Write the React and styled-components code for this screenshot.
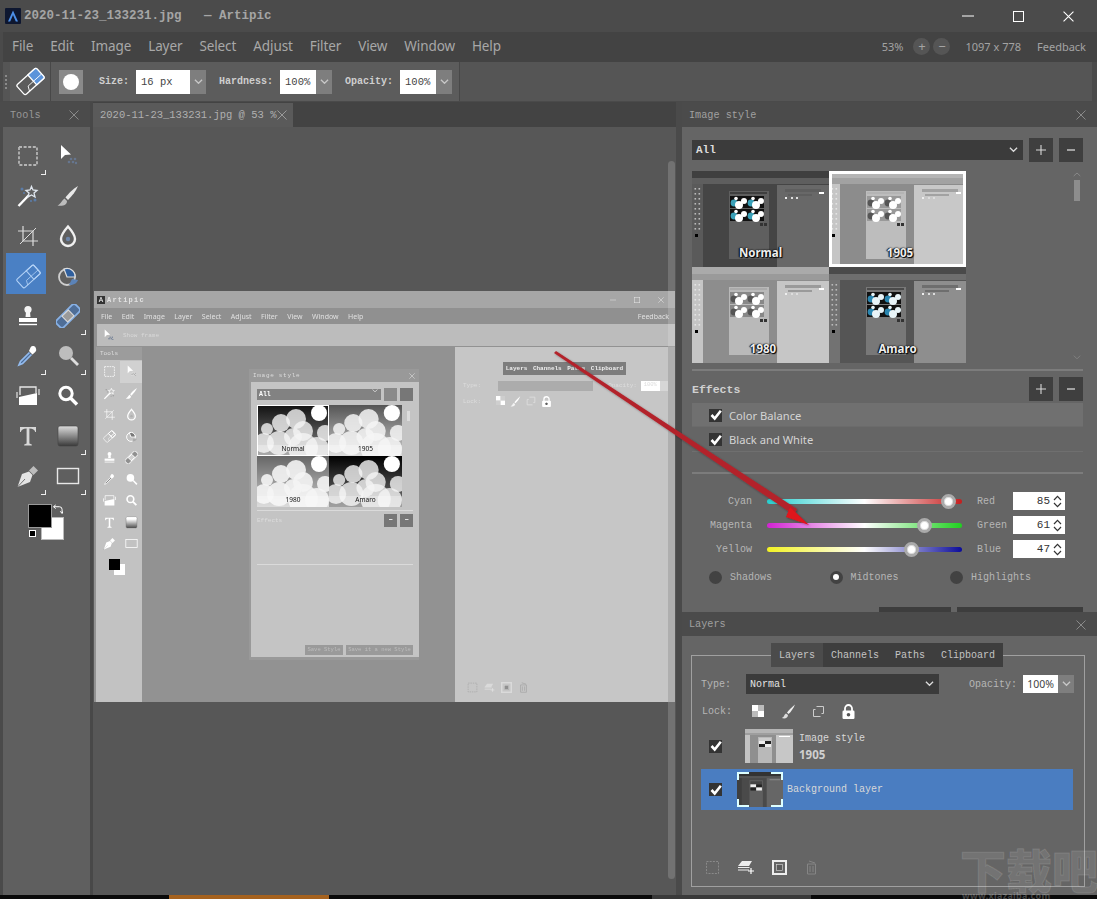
import React from 'react';
import styled, { createGlobalStyle } from 'styled-components';

const Global = createGlobalStyle`
  html, body { margin: 0; padding: 0; background: #4a4a4a; }
  * { box-sizing: border-box; }
  #root { width: 1097px; height: 899px; overflow: hidden; }
`;
const MONO = `"Liberation Mono", "DejaVu Sans Mono", monospace`;
const SANS = `"Noto Sans", "Open Sans", Arial, sans-serif`;

const Page = styled.div`
  position: relative; width: 1097px; height: 899px; overflow: hidden;
  background: #4a4a4a; display: flex; flex-direction: column; font-family: ${SANS};
`;
const TitleBar = styled.div`
  height: 32px; display: flex; align-items: center; padding-left: 5px; background: #4b4b4b; flex: none;
`;
const Logo = styled.svg`width: 16px; height: 16px; flex: none; margin-top: -1px;`;
const TitleText = styled.div`
  margin-left: 3px; font: bold 12.5px ${MONO}; color: #a5a5a5; white-space: pre; flex: 1;
`;
const WinBtn = styled.div`
  width: 50px; height: 32px; display: flex; align-items: center; justify-content: center;
  &:last-child { margin-right: 4px; }
`;
const MenuBar = styled.div`
  height: 30px; flex: none; margin-left: 3px; background: #434343; display: flex; align-items: center;
  padding: 0 11px 2px 9px; color: #a8a8a8; font-size: 13.5px;
`;
const MenuItem = styled.span`margin-right: 17px; letter-spacing: -.1px;`;
const MenuRight = styled.div`margin-left: auto; display: flex; align-items: center; font-size: 11px; color: #a4a4a4;`;
const ZoomBtn = styled.span`
  width: 17px; height: 17px; border-radius: 50%; background: #555; color: #a4a4a4; margin-left: ${p => p.$ml}px;
  display: flex; align-items: center; justify-content: center; font-size: 13px; line-height: 1;
`;
const SizeLabel = styled.span`margin-left: 15px; margin-right: 16px;`;
const OptionsBar = styled.div`
  height: 40px; flex: none; margin-left: 3px; margin-right: 5px; background: #555; display: flex; align-items: stretch;
  border-bottom: 1px solid #4a4a4a;
`;
const Grip = styled.div`
  width: 7px; padding-left: 2px; display: flex; flex-direction: column; gap: 2px; justify-content: center;
  & i { display: block; width: 2px; height: 2px; background: #8a8a8a; }
`;
const ToolSlot = styled.div`
  width: 41px; background: #5c5c5c; border-right: 1px solid #484848; display: flex; align-items: center; justify-content: center;
`;
const OptionGroup = styled.div`
  width: 409px; background: #5c5c5c; border-right: 1px solid #484848; display: flex; align-items: center; padding-left: 8px;
  font: bold 10px ${MONO}; color: #cfcfcf;
`;
const BrushPreview = styled.div`
  width: 24px; height: 24px; background: #8a8a8a; display: flex; align-items: center; justify-content: center; margin-right: 16px;
  &::after { content: ""; width: 16px; height: 16px; border-radius: 50%; background: #fff; }
`;
const OptLabel = styled.span`white-space: pre; margin-right: ${p => p.$mr}px;`;
const ComboValue = styled.div`
  width: ${p => p.$w}px; height: 24px; background: #fff; color: #444; font: 10.5px ${MONO}; display: flex; align-items: center; padding-left: 5px; white-space: pre;
`;
const ComboCaret = styled.div`
  width: 16px; height: 24px; background: #7e7e7e; display: flex; align-items: center; justify-content: center; margin-right: ${p => p.$mr}px;
`;
const Workspace = styled.div`flex: 1; display: flex; min-height: 0;`;
const ToolsColumn = styled.div`width: 90px; flex: none; display: flex; flex-direction: column;`;
const TabHead = styled.div`
  height: 25px; flex: none; background: #4b4b4b; display: flex; align-items: center; justify-content: space-between;
  padding: 1px 11px 0 10px; font: 10.2px ${MONO}; color: #979797;
`;
const ToolsBody = styled.div`
  flex: 1; margin-left: 3px; background: #5f5f5f; padding: 9px 0 0 5px;
`;
const ToolGrid = styled.div`display: grid; grid-template-columns: 40px 40px; grid-auto-rows: 40px;`;
const ToolCell = styled.div`
  position: relative; display: flex; align-items: center; justify-content: center;
  ${p => p.$active && `
    &::before { content: ""; position: absolute; left: -2px; top: -3px; width: 40px; height: 41px; background: #4a80c4; }
  `}
  & > * { position: relative; }
  ${p => p.$corner && `
    &::after { content: ""; position: absolute; right: 2px; bottom: 1px; width: 4px; height: 4px; border-right: 1px solid #eee; border-bottom: 1px solid #eee; }
  `}
`;
const SwatchBox = styled.div`position: relative; width: 42px; height: 42px; margin: 8px 0 0 15px;`;
const Fg = styled.div`position: absolute; left: 5px; top: 0; width: 24px; height: 24px; background: #000; border: 1px solid #999; z-index: 1;`;
const Bg = styled.div`position: absolute; left: 18px; top: 13px; width: 23px; height: 23px; background: #fff; border: 1px solid #bbb;`;
const MiniDefault = styled.div`
  position: absolute; left: 6px; top: 26px; width: 7px; height: 7px; background: #000; border: 1px solid #fff; z-index: 2;
`;
const SwapMark = styled.svg`position: absolute; left: 30px; top: 0; width: 10px; height: 10px;`;
const Gutter = styled.div`width: 3px; flex: none; background: #484848;`;
const DocColumn = styled.div`width: 583px; flex: none; display: flex; flex-direction: column;`;
const DocTabs = styled.div`height: 25px; flex: none; background: #434343; display: flex; align-items: flex-end;`;
const DocTab = styled.div`
  width: 200px; height: 24px; background: #5a5a5a; display: flex; align-items: center; justify-content: space-between;
  padding: 0 6px 0 7px; font: 10.5px ${MONO}; color: #b0b0b0; white-space: pre;
`;
const Canvas = styled.div`
  position: relative; flex: 1; background: #575757; padding: 164px 0 0 1px; overflow: hidden;
`;
const VScroll = styled.div`
  position: absolute; right: 1px; top: 34px; width: 7px; height: 718px; border-radius: 4px; background: rgba(255,255,255,.16);
`;
const RightGutter = styled.div`width: 6px; flex: none; background: #4a4a4a;`;
const Dock = styled.div`width: 415px; flex: none; display: flex; flex-direction: column;`;
const PanelHead = styled.div`
  height: ${p => p.$h}px; flex: none; background: #4b4b4b; display: flex; align-items: center; justify-content: space-between;
  padding: 1px 11px 0 7px; font: 10.2px ${MONO}; color: #a0a0a0;
`;
const StylePanel = styled.div`
  height: 485px; flex: none; background: #656565; padding: 11px 14px 0 10px; overflow: hidden; display: flex; flex-direction: column;
`;
const SelectRow = styled.div`display: flex; align-items: center; gap: 6px; height: 24px; flex: none;`;
const DarkSelect = styled.div`
  flex: ${p => (p.$w ? 'none' : '1')}; width: ${p => p.$w || 0}px; height: 20px; background: #3b3b3b; color: ${p => p.$c || '#ddd'}; display: flex; align-items: center; justify-content: space-between;
  padding: 0 5px 0 4px; font: ${p => p.$weight || 'bold'} ${p => p.$fs || 11}px ${MONO}; margin-right: ${p => p.$mr || 0}px;
`;
const SqBtn = styled.div`
  width: 24px; height: 24px; background: #3f3f3f; color: #d5d5d5; display: flex; align-items: center; justify-content: center;
`;
const GalleryRow = styled.div`margin-top: 9px; height: 192px; display: flex; flex: none; justify-content: space-between;`;
const Gallery = styled.div`display: grid; grid-template-columns: 137px 137px; grid-auto-rows: 96px;`;
const Thumb = styled.div`
  position: relative; overflow: hidden; display: flex; align-items: flex-end; justify-content: center;
  ${p => p.$sel && `&::after { content: ""; position: absolute; inset: 0; border: 3px solid #fff; }`}
`;
const ThumbSvg = styled.svg`position: absolute; inset: 0; width: 100%; height: 100%;`;
const ThumbLabel = styled.span`
  position: relative; font-size: 11.5px; font-weight: bold; color: #eee; margin-bottom: 7px; margin-left: ${p => p.$ml || 0}px;
  text-shadow: 1px 1px 1px #000, -1px 0 1px #000, 0 0 2px #000;
`;
const GalleryScroll = styled.div`
  width: 10px; display: flex; flex-direction: column; align-items: center; justify-content: space-between; padding: 1px 0 3px; margin-right: 1px;
`;
const ScrollThumb = styled.div`width: 6px; height: 21px; background: #8d8d8d; margin-top: 3px; margin-bottom: auto;`;
const Rule = styled.div`height: 2px; background: #7c7c7c; flex: none; margin-top: ${p => p.$mt}px;`;
const EffectsHead = styled.div`
  display: flex; align-items: center; gap: 6px; height: 24px; margin-top: 6px; flex: none;
  font: bold 11.5px ${MONO}; color: #d0d0d0;
`;
const EffectsTitle = styled.span`flex: 1;`;
const EffectRow = styled.div`
  height: ${p => p.$h}px; flex: none; background: ${p => (p.$on ? '#707070' : 'transparent')}; border-bottom: 1px solid ${p => (p.$on ? '#6b6b6b' : '#6f6f6f')};
  display: flex; align-items: center; padding: 1px 0 0 17px; gap: 7px; font-size: 11.2px; color: #d4d4d4;
  margin-top: ${p => p.$mt || 0}px;
`;
const Check = styled.span`
  width: 13px; height: 13px; background: #333; display: inline-flex; align-items: center; justify-content: center; flex: none;
`;
const Sliders = styled.div`margin-top: 15px; flex: none;`;
const SliderRow = styled.div`
  height: 24px; display: grid; grid-template-columns: 60px 225px 36px 52px; align-items: center;
  font: 10px ${MONO}; color: #b6b6b6;
`;
const SliderColumn = styled.span`display: block; &:first-child { text-align: right; }`;
const Track = styled.div`
  position: relative; height: 5px; margin: 0 15px; border-radius: 3px; background: linear-gradient(to right, ${p => p.$from}, #fff 50%, ${p => p.$to});
`;
const Knob = styled.div`
  position: absolute; top: 50%; width: 15px; height: 15px; margin: -7.5px 0 0 -7.5px; border-radius: 50%;
  background: #fff; border: 3px solid #aaa; box-shadow: inset 0 0 0 1px #ddd;
`;
const Stepper = styled.div`
  height: 18px; background: #fff; color: #333; font: 11px ${MONO};
  display: flex; align-items: center; justify-content: flex-end; gap: 3px; padding-right: 3px; width: 52px;
`;
const RadioRow = styled.div`
  display: flex; margin-top: 8px; height: 16px; align-items: center; padding-left: 17px; flex: none;
  font: 10px ${MONO}; color: #b6b6b6;
`;
const RadioItem = styled.div`width: 120.5px; display: flex; align-items: center; gap: 8px;`;
const RadioDot = styled.span`
  width: 13px; height: 13px; border-radius: 50%; background: #424242; display: flex; align-items: center; justify-content: center;
  ${p => p.$on && `&::after { content: ""; width: 6px; height: 6px; border-radius: 50%; background: #fff; }`}
`;
const SaveRow = styled.div`display: flex; justify-content: flex-end; gap: 6px; margin-top: 22px; flex: none;`;
const SaveBtn = styled.div`
  width: ${p => p.$w}px; height: 24px; background: #3d3d3d; color: #bbb; font: 11px ${MONO};
  display: flex; justify-content: center; padding-top: 6px;
`;
const LayersPanel = styled.div`flex: 1; background: #656565; padding: 19px 12px 8px 9px; display: flex; flex-direction: column;`;
const GroupBox = styled.div`
  flex: 1; border: 1px solid #a0a0a0; padding: 0 10px 10px 9px; display: flex; flex-direction: column;
`;
const GroupTabs = styled.div`
  display: flex; width: 232px; height: 24px; margin: -13px 0 0 70px; background: #3e3e3e; flex: none;
  font: 10px ${MONO}; color: #c4c4c4;
`;
const GTab = styled.div`
  width: ${p => p.$w}px; background: ${p => (p.$on ? '#4b4b4b' : 'transparent')}; display: flex; align-items: center; justify-content: center;
`;
const TypeRow = styled.div`display: flex; align-items: center; height: 20px; margin-top: 7px; flex: none; font: 10px ${MONO}; color: #b6b6b6;`;
const RowLabel = styled.span`width: ${p => p.$w}px; flex: none; padding-left: ${p => p.$pl || 0}px;`;
const SmallCombo = styled.div`
  width: 36px; height: 18px; background: #fff; color: #444; font: 10.5px ${SANS}; display: flex; align-items: center; justify-content: center;
`;
const SmallCaret = styled.div`width: 16px; height: 18px; background: #7e7e7e; display: flex; align-items: center; justify-content: center;`;
const LockRow = styled.div`display: flex; align-items: center; height: 20px; margin-top: 7px; flex: none; font: 10px ${MONO}; color: #b6b6b6;`;
const LockIcon = styled.div`width: 30px; display: flex; justify-content: center; flex: none;`;
const LayerRow = styled.div`
  height: ${p => p.$h}px; flex: none; display: flex; align-items: center; margin-top: ${p => p.$mt}px;
  background: ${p => (p.$on ? '#4a7dc1' : 'transparent')}; padding-left: 8px;
  margin-right: 1px;
`;
const LayerThumb = styled.div`
  position: relative; width: ${p => p.$w}px; height: ${p => p.$h}px; margin-left: ${p => p.$ml}px; flex: none;
  & svg { display: block; width: 100%; height: 100%; }
`;
const Corners = styled.i`
  position: absolute; inset: 0; display: block;
  background:
    linear-gradient(#dff,#dff) 0 0/12px 2px no-repeat, linear-gradient(#dff,#dff) 0 0/2px 8px no-repeat,
    linear-gradient(#dff,#dff) 100% 0/12px 2px no-repeat, linear-gradient(#dff,#dff) 100% 0/2px 8px no-repeat,
    linear-gradient(#dff,#dff) 0 100%/12px 2px no-repeat, linear-gradient(#dff,#dff) 0 100%/2px 8px no-repeat,
    linear-gradient(#dff,#dff) 100% 100%/12px 2px no-repeat, linear-gradient(#dff,#dff) 100% 100%/2px 8px no-repeat;
`;
const LayerInfo = styled.div`
  margin-left: ${p => p.$ml}px; font: 10px ${MONO}; color: #d8d8d8; line-height: 17px;
`;
const LayerStrong = styled.div`font: bold 11.5px ${SANS}; color: #cfcfcf;`;
const LayerTools = styled.div`margin-top: auto; display: flex; align-items: center; padding-left: 4px; gap: 17px; flex: none;`;
const BottomStrip = styled.div`height: 4px; flex: none; background: #0a0a0a; display: flex;`;
const StripSeg = styled.div`width: ${p => p.$w}px; background: ${p => p.$c};`;
const ArrowLayer = styled.svg`position: absolute; left: 0; top: 0; width: 1097px; height: 899px; pointer-events: none;`;
const Watermark = styled.div`
  position: absolute; left: 960px; top: 845px; width: 137px; pointer-events: none; white-space: nowrap; overflow: hidden;
  font: 900 46px "Noto Sans CJK SC", sans-serif; color: rgba(255,255,255,.1); -webkit-text-stroke: 1px rgba(255,255,255,.12); line-height: 47px;
`;
const WaterUrl = styled.div`
  font: bold 9px ${SANS}; -webkit-text-stroke: 0; color: rgba(255,255,255,.25); line-height: 7px; padding-left: 2px; letter-spacing: .3px;
`;

/* nested screenshot */
const Shot = styled.div`
  width: 581px; height: 411px; background: #929292; display: flex; flex-direction: column; overflow: hidden; color: #eee;
  filter: blur(.35px);
`;
const ShotTitle = styled.div`
  height: 17px; flex: none; background: #a6a6a6; display: flex; align-items: center; padding-left: 3px; font: bold 7px ${MONO}; letter-spacing: 1.2px; color: #e2e2e2;
`;
const ShotLogo = styled.span`
  width: 8px; height: 8px; background: #333; margin-right: 2px; color: #fff; font: 7px ${SANS}; line-height: 8px; text-align: center; letter-spacing: 0;
`;
const ShotWin = styled.div`
  margin-left: auto; display: flex; gap: 18px; padding-right: 11px; align-items: center;
`;
const ShotMenu = styled.div`
  height: 16px; flex: none; background: #909090; display: flex; align-items: center; padding: 0 6px 0 7px; font: 7px ${SANS}; color: #e0e0e0;
`;
const ShotMenuItem = styled.span`margin-right: 9.5px;`;
const ShotFeedback = styled.span`margin-left: auto;`;
const ShotOpts = styled.div`
  height: 22px; flex: none; margin-left: 3px; background: #bcbcbc; display: flex; align-items: center; padding-left: 5px; gap: 8px; font: 6px ${MONO}; color: #d8d8d8;
`;
const ShotBody = styled.div`flex: 1; display: flex; min-height: 0; margin-top: 1px;`;
const ShotTools = styled.div`width: 46px; margin-left: 2px; flex: none; display: flex; flex-direction: column;`;
const ShotToolsHead = styled.div`
  height: 13px; flex: none; background: #9c9c9c; font: 6px ${MONO}; color: #ddd; display: flex; align-items: center; padding-left: 4px;
`;
const ShotToolsBody = styled.div`flex: 1; background: #c2c2c2; padding: 1px 0 0 2px;`;
const ShotToolGrid = styled.div`
  display: grid; grid-template-columns: 22px 22px; grid-auto-rows: 21.5px; filter: grayscale(1) brightness(1.35);
`;
const ShotToolCell = styled.div`
  display: flex; align-items: center; justify-content: center; background: ${p => (p.$on ? 'rgba(255,255,255,.25)' : 'transparent')};
`;
const ShotSwatch = styled.div`
  position: relative; width: 16px; height: 16px; margin: 4px 0 0 11px;
  &::before { content: ""; position: absolute; left: 0; top: 0; width: 11px; height: 11px; background: #000; z-index: 1; }
  &::after { content: ""; position: absolute; left: 5px; top: 5px; width: 11px; height: 11px; background: #fff; }
`;
const ShotCanvas = styled.div`flex: 1; padding: 22px 36px 0 107px; min-width: 0; display: flex; align-items: flex-start;`;
const ShotPanel = styled.div`
  width: 170px; height: 291px; flex: none; background: #999; padding: 0 0 3px 2px; display: flex; flex-direction: column;
`;
const ShotPanelHead = styled.div`
  height: 13px; flex: none; font: 6px ${MONO}; letter-spacing: .7px; color: #ddd; display: flex; align-items: center; justify-content: space-between; padding: 0 4px 0 2px;
`;
const ShotPanelBody = styled.div`flex: 1; background: #c4c4c4; padding: 6px 6px 0 6px; display: flex; flex-direction: column;`;
const ShotSelRow = styled.div`display: flex; gap: 3px; height: 13px; align-items: center; flex: none;`;
const ShotSelect = styled.div`
  flex: 1; height: 11px; background: #828282; color: #fff; font: bold 6.5px ${MONO}; padding-left: 2px; line-height: 11px; display: flex; justify-content: space-between; padding-right: 3px;
`;
const ShotSq = styled.div`width: 13px; height: 13px; background: ${p => p.$c || '#8a8a8a'}; color: #fff; font: bold 7px ${SANS}; line-height: 12px; text-align: center; flex: none;`;
const ShotGalRow = styled.div`display: flex; gap: 5px; margin-top: 4px; flex: none;`;
const ShotCells = styled.div`display: grid; grid-template-columns: 72px 73px; grid-auto-rows: 51px; height: 102px; flex: none;`;
const ShotScroll = styled.div`width: 3px; height: 10px; background: #dcdcdc; margin-top: 6px;`;
const ShotCell = styled.div`
  position: relative; display: flex; align-items: flex-end; justify-content: center;
  & svg { position: absolute; inset: 0; width: 100%; height: 100%; }
  ${p => p.$sel && `&::after { content: ""; position: absolute; inset: 0; border: 1px solid #fff; }`}
`;
const ShotCellLabel = styled.span`position: relative; font: 6.5px ${SANS}; color: #111; margin-bottom: 3px;`;
const ShotRule = styled.div`height: 1px; background: #dadada; flex: none; margin-top: ${p => p.$mt}px;`;
const ShotEffects = styled.div`
  display: flex; gap: 3px; align-items: center; margin-top: 3px; height: 13px; font: 6px ${MONO}; color: #ddd; flex: none;
  & > span:first-child { flex: 1; }
`;
const ShotSave = styled.div`margin-top: auto; margin-bottom: 2px; display: flex; gap: 3px; justify-content: flex-end; flex: none;`;
const ShotSaveBtn = styled.div`
  width: ${p => p.$w}px; height: 10px; background: #9a9a9a; font: 5.5px ${MONO}; color: #bdbdbd; text-align: center; line-height: 10px; overflow: hidden; white-space: nowrap;
`;
const ShotLayers = styled.div`width: 213px; flex: none; background: #c6c6c6; display: flex; flex-direction: column; padding: 15px 0 0 8px; font: 6px ${MONO}; color: #ddd;`;
const ShotTabs = styled.div`
  margin-left: 40px; width: 123px; height: 13px; background: #7d7d7d; color: #eee; font: bold 6px ${MONO}; display: flex; justify-content: space-around; align-items: center; flex: none;
`;
const ShotTypeRow = styled.div`display: flex; align-items: center; height: 11px; margin-top: 5px; flex: none;`;
const ShotTypeSel = styled.div`width: 102px; height: 10px; background: #acacac; margin: 0 15px 0 17px;`;
const ShotOpacity = styled.div`width: 20px; height: 10px; background: #fff; margin-left: 4px; color: #ddd; font-size: 5.5px; text-align: center;`;
const ShotOpCaret = styled.div`width: 9px; height: 10px; background: #d6d6d6;`;
const ShotLock = styled.div`display: flex; align-items: center; margin-top: 3px; height: 14px; flex: none;`;
const ShotLockIcons = styled.div`display: flex; gap: 5px; margin-left: 15px; filter: brightness(1.1);`;
const ShotFoot = styled.div`margin-top: auto; padding: 0 0 9px 4px; display: flex; gap: 6px; flex: none; opacity: .5;`;
const ShotStrip = styled.div`width: 7px; flex: none; background: #a0a0a0;`;

/* icons */
const Ico = ({ s = 24, children }) => <svg width={s} height={s} viewBox="0 0 24 24" fill="none">{children}</svg>;
const Marquee = ({ s, c = '#b4b4b4' }) => <Ico s={s}><rect x="3" y="3" width="18" height="18" stroke={c} strokeWidth="1.8" strokeDasharray="3 1.6" /></Ico>;
const Pointer = ({ s }) => <Ico s={s}><path d="M5 1 L5 15 L9 11 L15 10.5 Z" fill="#fff" /><g fill="#66768f"><circle cx="15" cy="15" r="1.3" /><circle cx="19" cy="15" r="1.3" /><circle cx="17" cy="18" r="1.3" /><circle cx="13" cy="18" r="1.3" /><circle cx="20" cy="19" r="1.2" /></g></Ico>;
const Wand = ({ s }) => <Ico s={s}><path d="M2.5 22 L13 11" stroke="#fff" strokeWidth="2.4" /><path d="M15.5 2.5 L17 6 L21 6.5 L18 9 L19 13 L15.5 11 L12 13 L13 9 L10 6.5 L14 6 Z" stroke="#dfe6ee" strokeWidth="1.3" /><g fill="#5b7ca8"><circle cx="6" cy="5" r="1.5" /><circle cx="8" cy="9" r="1" /><circle cx="19" cy="16" r="1.5" /><circle cx="15" cy="17" r="1.1" /></g></Ico>;
const Brush = ({ s }) => <Ico s={s}><path d="M22 2 C17 5 12 10 9.5 13.5 L12 16 C16 12 20 7 22 2Z" fill="#e8e8e8" /><path d="M8.5 14.5 C6 16 5.5 19.5 1.5 21.5 C6 22.5 11 21.5 11 17 Z" fill="#bdbdbd" /></Ico>;
const Crop = ({ s }) => <Ico s={s}><path d="M7 2 V17 H22 M2 7 H17 V22" stroke="#dcdcdc" strokeWidth="1.2" /><path d="M4 20 L20 4" stroke="#dcdcdc" strokeWidth="1" /></Ico>;
const Drop = ({ s }) => <Ico s={s}><path d="M12 2.5 C12 2.5 5 10.5 5 15 a7 7 0 0 0 14 0 C19 10.5 12 2.5 12 2.5Z" stroke="#f0f0f0" strokeWidth="2.4" /><circle cx="12" cy="15" r="2.2" fill="#6d85a8" /></Ico>;
const Eraser = ({ s, line = '#fff', blue = '#5b93da', sw = 1.1 }) => (
  <Ico s={s}><g transform="rotate(-42 12 12)"><rect x="1" y="6.5" width="22" height="11" rx="1.6" stroke={line} strokeWidth={sw} fill="none" /><path d="M14 6.5 H21.4 a1.6 1.6 0 0 1 1.6 1.6 V15.9 a1.6 1.6 0 0 1-1.6 1.6 H14 Z" fill={blue} stroke={line} strokeWidth={sw} /><path d="M6 17.5 L8 13.5 H23" stroke={line} strokeWidth=".7" /></g></Ico>
);
const Replace = ({ s }) => <Ico s={s}><circle cx="11" cy="13" r="8" stroke="#cfcfcf" strokeWidth="1.8" /><path d="M8 5 A8 8 0 0 1 19 13 L11 13 Z" fill="#2f5f9e" stroke="#ddd" strokeWidth="1.2" /><path d="M13 21 C18 21 21 19 22 16 L16 15Z" fill="#5b83b8" /></Ico>;
const Stamp = ({ s }) => <Ico s={s}><circle cx="12" cy="5.5" r="3.6" fill="#f4f4f4" /><path d="M10 8 H14 L14.5 13 H9.5 Z" fill="#f4f4f4" /><path d="M3 14 H21 V18 H3Z" fill="#fff" /><path d="M3 20.5 H21" stroke="#fff" strokeWidth="1.4" /></Ico>;
const Bandage = ({ s }) => <Ico s={s}><g transform="rotate(-45 12 12)"><rect x="-1.5" y="7" width="27" height="10" rx="3" stroke="#87b1e6" strokeWidth="1.8" fill="#4f6e97" /><rect x="7.5" y="8" width="9" height="8" fill="#9a9a9a" stroke="#ddd" strokeWidth="1" /></g></Ico>;
const Dropper = ({ s }) => <Ico s={s}><path d="M14.5 3.5 a3 3 0 0 1 5.5 1 a3 3 0 0 1-0.5 3.2 L16.5 10.5 L13 7Z" fill="#fff" /><path d="M13.5 8.5 L4.5 17.5 L3 21 L6.5 19.5 L15.5 10.5" stroke="#93bbee" strokeWidth="1.7" fill="#4c6c98" /></Ico>;
const Dodge = ({ s }) => <Ico s={s}><circle cx="10" cy="9" r="7" fill="#bdbdbd" /><path d="M15 14 L22 21" stroke="#dedede" strokeWidth="2.8" /></Ico>;
const Burn = ({ s }) => <Ico s={s}><path d="M4 11 V3 H20 V9" stroke="#e6e6e6" strokeWidth="1.3" /><path d="M3 13 L21 9 V21 H3Z" fill="#fff" /><path d="M1 8 V14 M23 5 V11" stroke="#cfcfcf" strokeWidth="1.4" /></Ico>;
const Zoom = ({ s }) => <Ico s={s}><circle cx="10" cy="9.5" r="6.2" stroke="#fff" strokeWidth="3" /><path d="M14.5 14 L21 20.5" stroke="#fff" strokeWidth="3.4" /></Ico>;
const TypeT = ({ s }) => <Ico s={s}><path d="M4 3 H20 V8 H19.2 Q18.5 4.5 13.4 4.5 V19.5 L15.8 20.5 V21.5 H8.2 V20.5 L10.6 19.5 V4.5 Q5.5 4.5 4.8 8 H4Z" fill="#d8d8d8" /></Ico>;
const GradientBox = ({ s, id = 'gb' }) => <Ico s={s}><defs><linearGradient id={id} x1="0" y1="0" x2="0" y2="1"><stop offset="0" stopColor="#dcdcdc" /><stop offset="1" stopColor="#3a3a3a" /></linearGradient></defs><rect x="2" y="2" width="20" height="20" rx="2" fill={`url(#${id})`} stroke="#444" strokeWidth=".6" /></Ico>;
const Nib = ({ s }) => <Ico s={s}><path d="M1.5 23 L6 10 L13 7.5 L16.5 11 L14 18 Z" fill="#e4e4e4" /><path d="M1.5 23 L9 15" stroke="#555" strokeWidth=".8" /><path d="M13 6.5 L17.5 2 L22 6.5 L17.5 11 Z" fill="#bcbcbc" /></Ico>;
const RectIcon = ({ s }) => <Ico s={s}><rect x="1.5" y="4.5" width="21" height="15" stroke="#e8e8e8" strokeWidth="1.4" /></Ico>;
const CheckMark = () => <svg width="12" height="12" viewBox="0 0 12 12"><path d="M1.5 6 L4.7 9.5 L10.8 1.8" stroke="#fff" strokeWidth="2.6" fill="none" /></svg>;
const Chevron = ({ c = '#c8c8c8', w = 9, sw = 1.4 }) => <svg width={w} height={w * .6} viewBox="0 0 10 6"><path d="M1 .8 L5 4.8 L9 .8" stroke={c} strokeWidth={sw} fill="none" /></svg>;
const CloseX = ({ c = '#8a8a8a', s = 10 }) => <svg width={s} height={s} viewBox="0 0 10 10"><path d="M.5 .5 L9.5 9.5 M9.5 .5 L.5 9.5" stroke={c} strokeWidth="1" /></svg>;
const MinIcon = ({ c = '#fff', w = 12 }) => <svg width={w} height="2" viewBox="0 0 12 2"><path d="M0 1 H12" stroke={c} /></svg>;
const MaxIcon = ({ c = '#fff', s = 11 }) => <svg width={s} height={s} viewBox="0 0 11 11"><rect x=".5" y=".5" width="10" height="10" stroke={c} fill="none" /></svg>;
const Plus = () => <svg width="10" height="10" viewBox="0 0 10 10"><path d="M5 0 V10 M0 5 H10" stroke="#d8d8d8" strokeWidth="1.1" /></svg>;
const Minus = () => <svg width="10" height="10" viewBox="0 0 10 10"><path d="M1 5 H9" stroke="#d8d8d8" strokeWidth="1.3" /></svg>;
const UpDown = () => <svg width="9" height="13" viewBox="0 0 9 13"><path d="M1 5 L4.5 1.3 L8 5 M1 8 L4.5 11.7 L8 8" stroke="#333" strokeWidth="1.2" fill="none" /></svg>;
const Checker = ({ s = 12 }) => <svg width={s} height={s} viewBox="0 0 12 12"><rect width="6" height="6" fill="#fff" /><rect x="6" y="6" width="6" height="6" fill="#fff" /><rect x="6" width="6" height="6" fill="#bbb" /><rect y="6" width="6" height="6" fill="#bbb" /></svg>;
const LockBrush = ({ s = 15 }) => <svg width={s} height={s} viewBox="0 0 15 15"><path d="M14 .5 C11 3 8 6 6 8.5 L7.5 10 C10 8 12.5 4 14 .5Z" fill="#eee" /><path d="M5 9.5 C3 10.5 3.5 13 .8 14 C4 15 7 14 7 11Z" fill="#ddd" /></svg>;
const LockFrame = ({ s = 13 }) => <svg width={s} height={s} viewBox="0 0 13 13"><path d="M4.5 1.5 H11.5 V8.5 M1.5 4.5 V11.5 H8.5 M1.5 4.5 H3.5 M9.5 8.5 H11.5" stroke="#ccc" strokeWidth="1" fill="none" /></svg>;
const Padlock = ({ s = 15 }) => <svg width={s} height={s} viewBox="0 0 15 15"><path d="M4 7 V4.5 a3.5 3.5 0 0 1 7 0 V7" stroke="#fff" strokeWidth="1.8" fill="none" /><rect x="1.5" y="6.5" width="12" height="8.5" rx="1.2" fill="#fff" /><circle cx="7.5" cy="10.7" r="1.8" fill="#555" /></svg>;
const NewMask = ({ s = 15 }) => <svg width={s} height={s} viewBox="0 0 15 15"><rect x="1.5" y="1.5" width="12" height="12" stroke="#8a8a8a" strokeWidth="1" strokeDasharray="2 1.2" fill="none" /></svg>;
const StackAdd = ({ s = 18 }) => <svg width={s} height={s} viewBox="0 0 18 18"><path d="M5 3 H15 L12 8 H1Z" fill="#eee" /><path d="M1 9.5 H12.5 M1 12 H12" stroke="#eee" strokeWidth="1.2" /><path d="M14 10 V16 M11 13 H17" stroke="#fff" strokeWidth="1.2" /></svg>;
const MaskBtn = ({ s = 15 }) => <svg width={s} height={s} viewBox="0 0 15 15"><rect x="1" y="1" width="13" height="13" stroke="#eee" strokeWidth="2" fill="none" /><rect x="4.5" y="4.5" width="6" height="6" fill="#5a5a5a" stroke="#ddd" strokeWidth=".6" /></svg>;
const Trash = ({ s = 15 }) => <svg width={s} height={s} viewBox="0 0 15 15"><path d="M3.5 4 H11.5 V14 H3.5Z M5 1 L11 3 M6 6 V12 M9 6 V12" stroke="#858585" strokeWidth="1" fill="none" /></svg>;

/* pictures */
const bokeh = [[24,18,9],[39,14,10],[46,26,10],[7,38,10],[22,38,12],[46,43,15],[68,28,8],[36,32,9],[60,44,12],[10,24,6]];
const Bokeh = ({ top, bottom, id, op = .8 }) => (
  <svg viewBox="0 0 72 51" preserveAspectRatio="none">
    <defs><linearGradient id={id} x1="0" y1="0" x2="0" y2="1"><stop offset="0" stopColor={top} /><stop offset="1" stopColor={bottom} /></linearGradient></defs>
    <rect width="72" height="51" fill={`url(#${id})`} />
    {bokeh.map(([x, y, r], i) => <circle key={i} cx={x} cy={y} r={r} fill="#f4f4f4" opacity={op} />)}
    <circle cx="62" cy="8" r="8" fill="#fff" />
    <rect x="0" y="40" width="72" height="11" fill="#fff" opacity=".3" />
  </svg>
);
const themes = {
  normal: { bar: '#3f3f3f', menu: '#5e5e5e', tools: '#5a5a5a', canvas: '#454545', panel: '#5f5f5f', right: '#686868', top: '#111', cell: '#fff', tint: '#3aa0b8' },
  y1905: { bar: '#b4b4b4', menu: '#a2a2a2', tools: '#c5c5c5', canvas: '#8c8c8c', panel: '#bdbdbd', right: '#c8c8c8', top: '#999', cell: '#fff', tint: '#555' },
  y1980: { bar: '#aaa', menu: '#9a9a9a', tools: '#c5c5c5', canvas: '#8d8d8d', panel: '#b9b9b9', right: '#c6c6c6', top: '#888', cell: '#fff', tint: '#555' },
  amaro: { bar: '#4a4a4a', menu: '#6e6e6e', tools: '#727272', canvas: '#555', panel: '#787878', right: '#8e8e8e', top: '#111', cell: '#e8f4f8', tint: '#2a86b0' },
};
const MiniScreen = ({ t }) => {
  const c = themes[t];
  const cell = (x, y) => (
    <g key={`${x}-${y}`}>
      <rect x={x} y={y} width="17" height="12" fill={c.top} />
      <circle cx={x + 4} cy={y + 7} r="3.4" fill={c.tint} />
      <circle cx={x + 9} cy={y + 9} r="4" fill={c.cell} />
      <circle cx={x + 14} cy={y + 5} r="3" fill={c.cell} />
      <circle cx={x + 6} cy={y + 2.5} r="1.8" fill={c.cell} />
    </g>
  );
  const dots = [];
  for (let r = 0; r < 9; r++) for (let col = 0; col < 2; col++) dots.push(<rect key={`${r}${col}`} x={col ? 6.5 : 2.5} y={17 + r * 5} width="1.6" height="1.6" fill={t === 'normal' || t === 'amaro' ? '#bbb' : '#e4e4e4'} />);
  return (
    <ThumbSvg viewBox="0 0 137 96" preserveAspectRatio="none">
      <rect width="137" height="96" fill={c.canvas} />
      <rect width="137" height="7" fill={c.bar} />
      <rect y="7" width="137" height="6" fill={c.menu} />
      <rect y="13" width="11" height="83" fill={c.tools} />
      {dots}
      <rect x="3" y="63" width="3" height="3" fill="#000" />
      <rect x="37" y="20" width="40" height="68" fill={c.panel} />
      <rect x="38" y="21" width="37" height="2" fill={c.bar} />
      {cell(38, 25)}{cell(55, 25)}{cell(38, 38)}{cell(55, 38)}
      <rect x="68" y="52" width="3" height="3" fill="#333" /><rect x="72" y="52" width="3" height="3" fill="#333" />
      <rect x="85" y="14" width="52" height="82" fill={c.right} />
      <rect x="93" y="18" width="36" height="3" fill={c.menu} />
      <rect x="96" y="23" width="24" height="2" fill={c.menu} />
      <rect x="127" y="21" width="5" height="2" fill="#fff" />
      <rect x="93" y="26" width="2" height="2" fill="#eee" /><rect x="99" y="26" width="2" height="2" fill="#ddd" /><rect x="104" y="26" width="2" height="2" fill="#ddd" />
    </ThumbSvg>
  );
};
const LayerPic = ({ dark }) => (
  <svg viewBox="0 0 48 34" preserveAspectRatio="none">
    <rect width="48" height="34" fill={dark ? '#4a4a4a' : '#8f8f8f'} />
    <rect width="48" height="4" fill={dark ? '#333' : '#b5b5b5'} />
    <rect y="4" width="48" height="2" fill={dark ? '#555' : '#9e9e9e'} />
    <rect y="6" width="5" height="28" fill={dark ? '#3f3f3f' : '#c3c3c3'} />
    <rect x="13" y="8" width="14" height="26" fill={dark ? '#5f5f5f' : '#b9b9b9'} />
    <rect x="14" y="9" width="12" height="3" fill={dark ? '#444' : '#ccc'} />
    <rect x="14" y="12" width="6" height="3" fill="#eee" /><rect x="20" y="12" width="6" height="3" fill="#222" /><rect x="14" y="15" width="6" height="3" fill="#222" /><rect x="20" y="15" width="6" height="3" fill="#eee" />
    <rect x="31" y="6" width="17" height="28" fill={dark ? '#666' : '#c7c7c7'} />
    <rect x="34" y="7" width="11" height="1" fill={dark ? '#888' : '#fff'} />
  </svg>
);

const MENU = ['File', 'Edit', 'Image', 'Layer', 'Select', 'Adjust', 'Filter', 'View', 'Window', 'Help'];
const TOOLS = [
  [Marquee, 1, 0], [Pointer, 0, 0], [Wand, 0, 0], [Brush, 0, 0], [Crop, 0, 0], [Drop, 0, 0],
  [null, 0, 1], [Replace, 0, 0], [Stamp, 0, 0], [Bandage, 1, 0], [Dropper, 1, 0], [Dodge, 1, 0],
  [Burn, 0, 0], [Zoom, 0, 0], [TypeT, 0, 0], [GradientBox, 1, 0], [Nib, 1, 0], [RectIcon, 1, 0],
];
const SHOT_TOOLS = [Marquee, Pointer, Wand, Brush, Crop, Drop, Eraser, Replace, Stamp, Bandage, Dropper, Dodge, Burn, Zoom, TypeT, GradientBox, Nib, RectIcon];

const NestedShot = () => (
  <Shot>
    <ShotTitle>
      <ShotLogo>A</ShotLogo>Artipic
      <ShotWin><MinIcon c="#e4e4e4" w={6} /><MaxIcon c="#e4e4e4" s={6} /><CloseX c="#e4e4e4" s={6} /></ShotWin>
    </ShotTitle>
    <ShotMenu>{MENU.map(m => <ShotMenuItem key={m}>{m}</ShotMenuItem>)}<ShotFeedback>Feedback</ShotFeedback></ShotMenu>
    <ShotOpts><Pointer s={13} /><span>Show frame</span></ShotOpts>
    <ShotBody>
      <ShotTools>
        <ShotToolsHead>Tools</ShotToolsHead>
        <ShotToolsBody>
          <ShotToolGrid>
            {SHOT_TOOLS.map((I, i) => <ShotToolCell key={i} $on={i === 1}><I s={13} id="sg" /></ShotToolCell>)}
          </ShotToolGrid>
          <ShotSwatch />
        </ShotToolsBody>
      </ShotTools>
      <ShotCanvas>
        <ShotPanel>
          <ShotPanelHead><span>Image style</span><CloseX c="#ddd" s={6} /></ShotPanelHead>
          <ShotPanelBody>
            <ShotSelRow><ShotSelect>All<Chevron c="#ddd" w={6} /></ShotSelect><ShotSq /><ShotSq $c="#777" /></ShotSelRow>
            <ShotGalRow>
              <ShotCells>
                <ShotCell $sel><Bokeh top="#111" bottom="#888" id="b1" /><ShotCellLabel>Normal</ShotCellLabel></ShotCell>
                <ShotCell><Bokeh top="#555" bottom="#ccc" id="b2" op={.85} /><ShotCellLabel>1905</ShotCellLabel></ShotCell>
                <ShotCell><Bokeh top="#666" bottom="#ccc" id="b3" op={.9} /><ShotCellLabel>1980</ShotCellLabel></ShotCell>
                <ShotCell><Bokeh top="#000" bottom="#777" id="b4" /><ShotCellLabel>Amaro</ShotCellLabel></ShotCell>
              </ShotCells>
              <ShotScroll />
            </ShotGalRow>
            <ShotRule $mt={3} />
            <ShotEffects><span>Effects</span><ShotSq $c="#777">−</ShotSq><ShotSq $c="#777">−</ShotSq></ShotEffects>
            <ShotRule $mt={37} />
            <ShotSave><ShotSaveBtn $w={38}>Save Style</ShotSaveBtn><ShotSaveBtn $w={67}>Save it a new Style</ShotSaveBtn></ShotSave>
          </ShotPanelBody>
        </ShotPanel>
      </ShotCanvas>
      <ShotLayers>
        <ShotTabs><span>Layers</span><span>Channels</span><span>Paths</span><span>Clipboard</span></ShotTabs>
        <ShotTypeRow><span>Type:</span><ShotTypeSel /><span>Opacity:</span><ShotOpacity>100%</ShotOpacity><ShotOpCaret /></ShotTypeRow>
        <ShotLock>
          <span>Lock:</span>
          <ShotLockIcons><Checker s={9} /><LockBrush s={11} /><LockFrame s={10} /><Padlock s={11} /></ShotLockIcons>
        </ShotLock>
        <ShotFoot><NewMask s={11} /><StackAdd s={11} /><MaskBtn s={11} /><Trash s={11} /></ShotFoot>
      </ShotLayers>
      <ShotStrip />
    </ShotBody>
  </Shot>
);

export default function App() {
  return (
    <Page>
      <Global />
      <TitleBar>
        <Logo viewBox="0 0 16 16"><rect width="16" height="16" rx="1" fill="#0e1730" /><path d="M8 2.5 L3 13.5 H5.2 L8 7 L10.8 13.5 H13 Z" fill="#4c8fe8" /></Logo>
        <TitleText>2020-11-23_133231.jpg   — Artipic</TitleText>
        <WinBtn><MinIcon /></WinBtn>
        <WinBtn><MaxIcon /></WinBtn>
        <WinBtn><CloseX c="#fff" s={11} /></WinBtn>
      </TitleBar>
      <MenuBar>
        {MENU.map(m => <MenuItem key={m}>{m}</MenuItem>)}
        <MenuRight>
          <span>53%</span><ZoomBtn $ml={10}>+</ZoomBtn><ZoomBtn $ml={3}>−</ZoomBtn>
          <SizeLabel>1097 x 778</SizeLabel><span>Feedback</span>
        </MenuRight>
      </MenuBar>
      <OptionsBar>
        <Grip><i /><i /><i /><i /></Grip>
        <ToolSlot><Eraser s={29} /></ToolSlot>
        <OptionGroup>
          <BrushPreview />
          <OptLabel $mr={7}>Size:</OptLabel>
          <ComboValue $w={54}>16 px</ComboValue><ComboCaret $mr={13}><Chevron /></ComboCaret>
          <OptLabel $mr={7}>Hardness:</OptLabel>
          <ComboValue $w={36}>100%</ComboValue><ComboCaret $mr={13}><Chevron /></ComboCaret>
          <OptLabel $mr={7}>Opacity:</OptLabel>
          <ComboValue $w={36}>100%</ComboValue><ComboCaret $mr={0}><Chevron /></ComboCaret>
        </OptionGroup>
      </OptionsBar>
      <Workspace>
        <ToolsColumn>
          <TabHead>Tools<CloseX /></TabHead>
          <ToolsBody>
            <ToolGrid>
              {TOOLS.map(([I, corner, active], i) => (
                <ToolCell key={i} $corner={corner} $active={active}>
                  {active ? <Eraser s={25} line="#b4d2f6" blue="transparent" sw={1} /> : <I s={24} />}
                </ToolCell>
              ))}
            </ToolGrid>
            <SwatchBox>
              <Fg /><Bg /><MiniDefault />
              <SwapMark viewBox="0 0 11 11"><path d="M1 3 H7 a3 3 0 0 1 3 3 V10 M8 8 L10 10.5 L11 8 M3 1 L0.5 3 L3 5" stroke="#fff" strokeWidth="1.1" fill="none" /></SwapMark>
            </SwatchBox>
          </ToolsBody>
        </ToolsColumn>
        <Gutter />
        <DocColumn>
          <DocTabs>
            <DocTab>2020-11-23_133231.jpg @ 53 %<CloseX c="#9a9a9a" /></DocTab>
          </DocTabs>
          <Canvas>
            <NestedShot />
            <VScroll />
          </Canvas>
        </DocColumn>
        <RightGutter />
        <Dock>
          <PanelHead $h={25}><span>Image style</span><CloseX /></PanelHead>
          <StylePanel>
            <SelectRow>
              <DarkSelect>All<Chevron c="#ddd" /></DarkSelect>
              <SqBtn><Plus /></SqBtn><SqBtn><Minus /></SqBtn>
            </SelectRow>
            <GalleryRow>
              <Gallery>
                <Thumb><MiniScreen t="normal" /><ThumbLabel>Normal</ThumbLabel></Thumb>
                <Thumb $sel><MiniScreen t="y1905" /><ThumbLabel $ml={5}>1905</ThumbLabel></Thumb>
                <Thumb><MiniScreen t="y1980" /><ThumbLabel $ml={5}>1980</ThumbLabel></Thumb>
                <Thumb><MiniScreen t="amaro" /><ThumbLabel>Amaro</ThumbLabel></Thumb>
              </Gallery>
              <GalleryScroll>
                <svg width="8" height="5" viewBox="0 0 8 5"><path d="M.7 4 L4 1 L7.3 4" stroke="#888" fill="none" /></svg>
                <ScrollThumb />
                <Chevron c="#888" w={8} sw={1} />
              </GalleryScroll>
            </GalleryRow>
            <Rule $mt={6} />
            <EffectsHead><EffectsTitle>Effects</EffectsTitle><SqBtn><Plus /></SqBtn><SqBtn><Minus /></SqBtn></EffectsHead>
            <EffectRow $on $h={24} $mt={2}><Check><CheckMark /></Check>Color Balance</EffectRow>
            <EffectRow $h={25}><Check><CheckMark /></Check>Black and White</EffectRow>
            <Rule $mt={20} />
            <Sliders>
              <SliderRow><SliderColumn>Cyan</SliderColumn><Track $from="#26cfcf" $to="#c41e1e"><Knob style={{ left: '93%' }} /></Track><SliderColumn>Red</SliderColumn><Stepper>85<UpDown /></Stepper></SliderRow>
              <SliderRow><SliderColumn>Magenta</SliderColumn><Track $from="#d222d2" $to="#1fd01f"><Knob style={{ left: '81%' }} /></Track><SliderColumn>Green</SliderColumn><Stepper>61<UpDown /></Stepper></SliderRow>
              <SliderRow><SliderColumn>Yellow</SliderColumn><Track $from="#f2f222" $to="#0c0c9a"><Knob style={{ left: '74%' }} /></Track><SliderColumn>Blue</SliderColumn><Stepper>47<UpDown /></Stepper></SliderRow>
            </Sliders>
            <RadioRow>
              <RadioItem><RadioDot />Shadows</RadioItem>
              <RadioItem><RadioDot $on />Midtones</RadioItem>
              <RadioItem><RadioDot />Highlights</RadioItem>
            </RadioRow>
            <SaveRow><SaveBtn $w={72}>Save Style</SaveBtn><SaveBtn $w={126}>Save it a new Style</SaveBtn></SaveRow>
          </StylePanel>
          <PanelHead $h={24}><span>Layers</span><CloseX /></PanelHead>
          <LayersPanel>
            <GroupBox>
              <GroupTabs>
                <GTab $w={52} $on>Layers</GTab><GTab $w={64}>Channels</GTab><GTab $w={46}>Paths</GTab><GTab $w={70}>Clipboard</GTab>
              </GroupTabs>
              <TypeRow>
                <RowLabel $w={45}>Type:</RowLabel>
                <DarkSelect $w={193} $mr={30} $weight="normal" $fs={10} $c="#e4e4e4">Normal<Chevron c="#ddd" /></DarkSelect>
                <RowLabel $w={54}>Opacity:</RowLabel>
                <SmallCombo>100%</SmallCombo><SmallCaret><Chevron /></SmallCaret>
              </TypeRow>
              <LockRow>
                <RowLabel $w={42} $pl={1}>Lock:</RowLabel>
                <LockIcon><Checker /></LockIcon><LockIcon><LockBrush /></LockIcon><LockIcon><LockFrame /></LockIcon><LockIcon><Padlock /></LockIcon>
              </LockRow>
              <LayerRow $h={40} $mt={5}>
                <Check><CheckMark /></Check>
                <LayerThumb $w={48} $h={34} $ml={23}><LayerPic /></LayerThumb>
                <LayerInfo $ml={6}>Image style<LayerStrong>1905</LayerStrong></LayerInfo>
              </LayerRow>
              <LayerRow $h={41} $mt={3} $on>
                <Check><CheckMark /></Check>
                <LayerThumb $w={46} $h={35} $ml={15}><LayerPic dark /><Corners /></LayerThumb>
                <LayerInfo $ml={4}>Background layer</LayerInfo>
              </LayerRow>
              <LayerTools>
                <NewMask /><StackAdd /><MaskBtn /><Trash />
              </LayerTools>
            </GroupBox>
          </LayersPanel>
        </Dock>
      </Workspace>
      <BottomStrip>
        <StripSeg $w={169} $c="#0a0a0a" /><StripSeg $w={160} $c="#a5621f" /><StripSeg $w={323} $c="#0a0a0a" /><StripSeg $w={159} $c="#3a3a3a" /><StripSeg $w={286} $c="#0a0a0a" />
      </BottomStrip>
      <Watermark>下载吧<WaterUrl>www.xiazaiba.com</WaterUrl></Watermark>
      <ArrowLayer viewBox="0 0 1097 899">
        <defs><filter id="ash" x="-5%" y="-5%" width="110%" height="110%"><feDropShadow dx="1" dy="1" stdDeviation="1.2" floodColor="#000" floodOpacity=".35" /></filter></defs>
        <g filter="url(#ash)">
          <path d="M554 353 L556 351 L797 509 L794 515 Z" fill="#b3232a" />
          <path d="M790 507 L809 525 L786 517 Z" fill="#e0121b" />
        </g>
      </ArrowLayer>
    </Page>
  );
}
